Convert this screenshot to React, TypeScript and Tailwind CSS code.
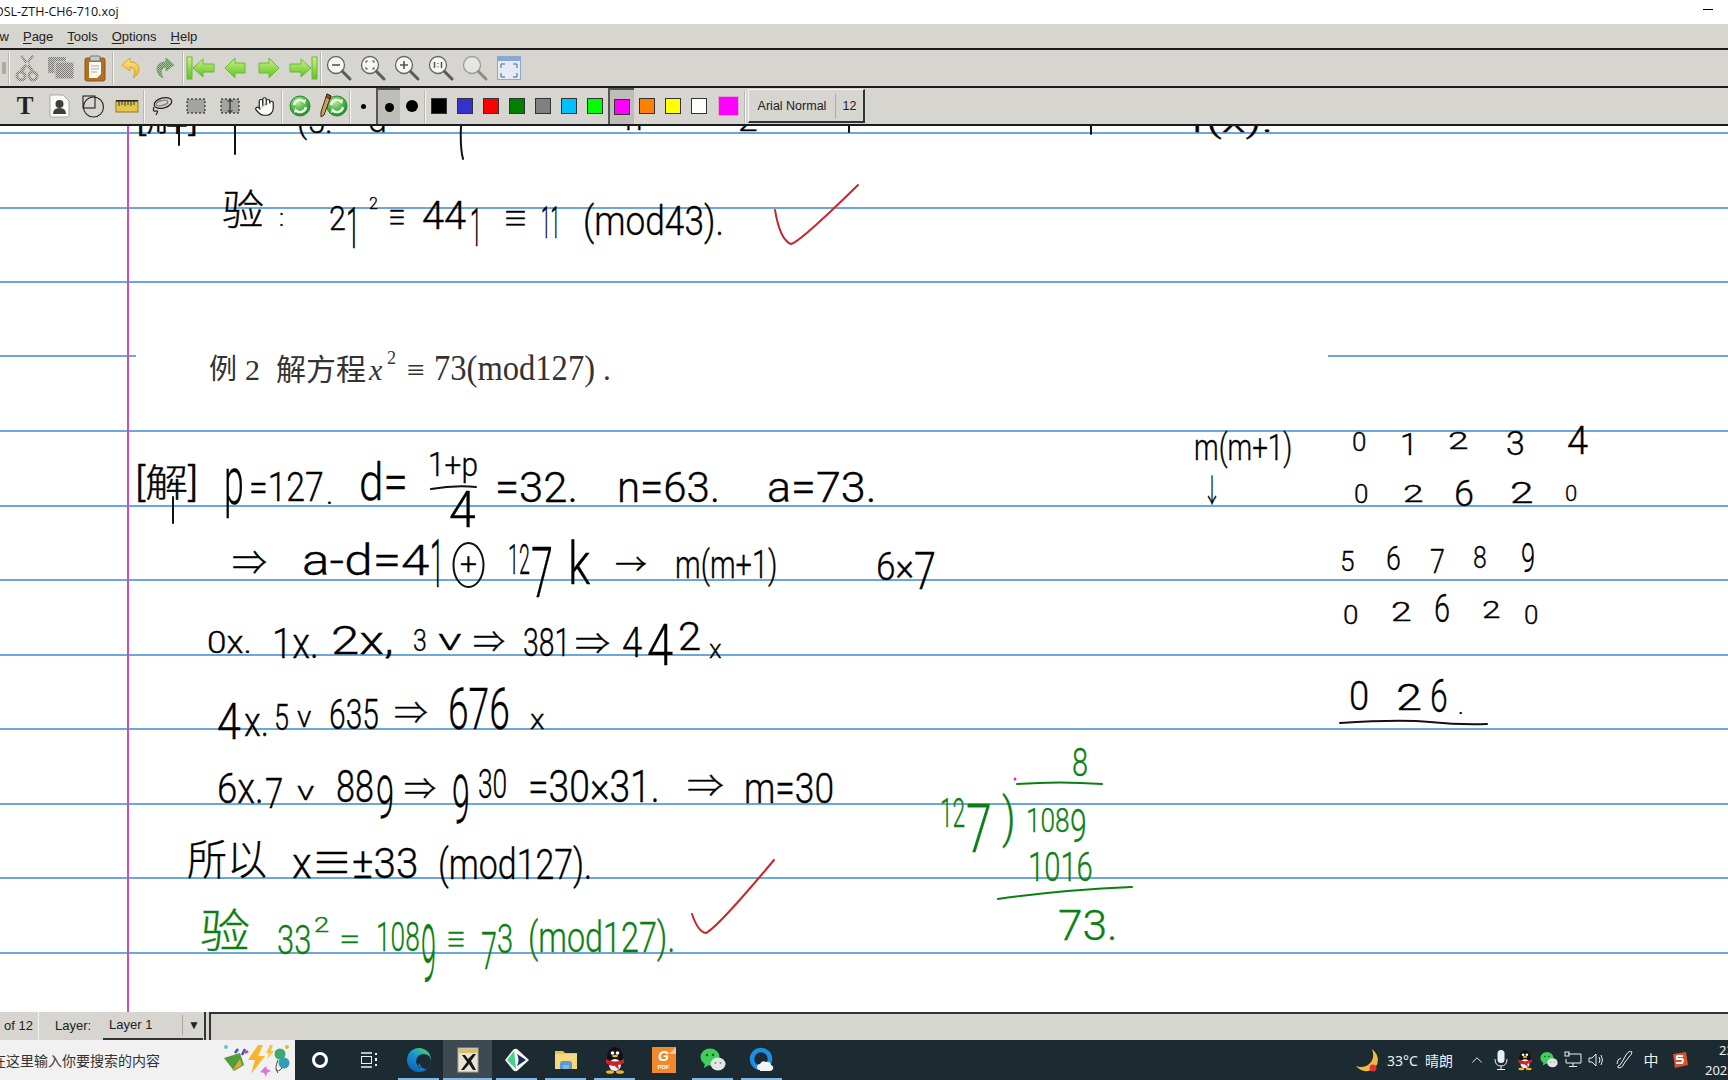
import { useLayoutEffect, useRef, type ReactNode } from "react";
import { ChevronUp, Hand } from "lucide-react";

const RULES = [132, 206.5, 281, 355.4, 430, 504.6, 579, 653.6, 728, 802.6, 877.2, 951.8];

type Chunk = { t: string; x: number; y: number; s: number; w?: number };

const BLACK: Chunk[] = [
	// cut off under the toolbar
	{ t: "[解]", x: 136, y: 129, s: 34, w: 62 },
	{ t: "(5.", x: 297, y: 131, s: 32 },
	{ t: "d=", x: 368, y: 130, s: 34 },
	{ t: "n=", x: 625, y: 128, s: 32 },
	{ t: "2", x: 738, y: 129, s: 32, w: 20 },
	{ t: "f(x).", x: 1190, y: 130, s: 32, w: 84 },
	// verify line
	{ t: "验", x: 222, y: 223, s: 42 },
	{ t: ":", x: 279, y: 224, s: 24 },
	{ t: "2", x: 329, y: 228, s: 34, w: 17 },
	{ t: "1", x: 346, y: 246, s: 58, w: 14 },
	{ t: "2", x: 369, y: 207, s: 16 },
	{ t: "≡", x: 388, y: 226, s: 30, w: 18 },
	{ t: "44", x: 422, y: 227, s: 38, w: 44 },
	{ t: "1", x: 470, y: 244, s: 54, w: 12 },
	{ t: "≡", x: 503, y: 227, s: 30, w: 25 },
	{ t: "11", x: 541, y: 236, s: 44, w: 19 },
	{ t: "(mod43).", x: 583, y: 234, s: 40, w: 141 },
	// solution
	{ t: "[解]", x: 135, y: 494, s: 38, w: 63 },
	{ t: "p", x: 224, y: 503, s: 66, w: 20 },
	{ t: "=127", x: 249, y: 500, s: 40, w: 75 },
	{ t: ".", x: 326, y: 502, s: 30 },
	{ t: "d=", x: 359, y: 499, s: 52, w: 49 },
	{ t: "1+p", x: 428, y: 474, s: 34, w: 50 },
	{ t: "4", x: 449, y: 525, s: 50, w: 27 },
	{ t: "=32.", x: 495, y: 500, s: 42, w: 83 },
	{ t: "n=63.", x: 617, y: 500, s: 42, w: 103 },
	{ t: "a=73.", x: 767, y: 500, s: 42, w: 109 },
	{ t: "⇒", x: 232, y: 573, s: 34, w: 35 },
	{ t: "a-d=4", x: 302, y: 573, s: 42, w: 127 },
	{ t: "1", x: 430, y: 586, s: 66, w: 14 },
	{ t: "+", x: 460, y: 572, s: 30, w: 17 },
	{ t: "12", x: 508, y: 572, s: 42, w: 22 },
	{ t: "7", x: 531, y: 595, s: 70, w: 22 },
	{ t: "k", x: 568, y: 582, s: 60, w: 22 },
	{ t: "→", x: 615, y: 573, s: 30, w: 32 },
	{ t: "m(m+1)", x: 675, y: 576, s: 38, w: 102 },
	{ t: "6×", x: 876, y: 578, s: 38, w: 38 },
	{ t: "7", x: 914, y: 588, s: 52, w: 22 },
	{ t: "0x.", x: 207, y: 651, s: 32, w: 45 },
	{ t: "1x.", x: 272, y: 656, s: 42, w: 47 },
	{ t: "2x,", x: 331, y: 652, s: 38, w: 63 },
	{ t: "3", x: 413, y: 649, s: 32, w: 14 },
	{ t: "v", x: 438, y: 648, s: 30, w: 23 },
	{ t: "⇒", x: 473, y: 650, s: 30, w: 32 },
	{ t: "381", x: 523, y: 654, s: 38, w: 47 },
	{ t: "⇒", x: 575, y: 652, s: 30, w: 35 },
	{ t: "4", x: 622, y: 655, s: 42, w: 20 },
	{ t: "4", x: 647, y: 663, s: 58, w: 26 },
	{ t: "2", x: 678, y: 648, s: 38, w: 23 },
	{ t: "x", x: 709, y: 656, s: 26, w: 13 },
	{ t: "4", x: 217, y: 737, s: 50, w: 24 },
	{ t: "x.", x: 244, y: 735, s: 40, w: 25 },
	{ t: "5", x: 274, y: 728, s: 36, w: 15 },
	{ t: "v", x: 297, y: 725, s: 30, w: 14 },
	{ t: "635", x: 329, y: 727, s: 42, w: 50 },
	{ t: "⇒", x: 394, y: 722, s: 32, w: 34 },
	{ t: "676", x: 448, y: 727, s: 58, w: 62 },
	{ t: "x", x: 530, y: 728, s: 28, w: 15 },
	{ t: "6x.", x: 217, y: 801, s: 42, w: 47 },
	{ t: "7", x: 265, y: 806, s: 42, w: 18 },
	{ t: "v", x: 297, y: 798, s: 26, w: 18 },
	{ t: "88", x: 336, y: 800, s: 44, w: 38 },
	{ t: "9", x: 376, y: 816, s: 60, w: 18 },
	{ t: "⇒", x: 404, y: 797, s: 30, w: 32 },
	{ t: "9", x: 452, y: 822, s: 66, w: 18 },
	{ t: "30", x: 478, y: 797, s: 40, w: 29 },
	{ t: "=30×31.", x: 528, y: 800, s: 44, w: 132 },
	{ t: "⇒", x: 687, y: 795, s: 32, w: 37 },
	{ t: "m=30", x: 744, y: 801, s: 42, w: 90 },
	{ t: "所以", x: 187, y: 873, s: 42, w: 80 },
	{ t: "x≡±33", x: 292, y: 876, s: 42, w: 126 },
	{ t: "(mod127).", x: 438, y: 877, s: 42, w: 154 },
	// side table
	{ t: "m(m+1)", x: 1194, y: 458, s: 36, w: 98 },
	{ t: "↓", x: 1203, y: 500, s: 32, w: 18 },
	{ t: "0", x: 1352, y: 449, s: 26 },
	{ t: "1", x: 1400, y: 453, s: 32 },
	{ t: "2", x: 1448, y: 447, s: 24, w: 20 },
	{ t: "3", x: 1506, y: 453, s: 34 },
	{ t: "4", x: 1567, y: 452, s: 38 },
	{ t: "0", x: 1354, y: 501, s: 26 },
	{ t: "2", x: 1403, y: 500, s: 24, w: 20 },
	{ t: "6", x: 1454, y: 504, s: 36 },
	{ t: "2", x: 1510, y: 501, s: 30, w: 24 },
	{ t: "0", x: 1565, y: 500, s: 22 },
	{ t: "5", x: 1340, y: 570, s: 28, w: 15 },
	{ t: "6", x: 1386, y: 568, s: 34, w: 15 },
	{ t: "7", x: 1430, y: 571, s: 34, w: 15 },
	{ t: "8", x: 1473, y: 566, s: 32, w: 14 },
	{ t: "9", x: 1521, y: 571, s: 40, w: 14 },
	{ t: "0", x: 1343, y: 622, s: 26, w: 15 },
	{ t: "2", x: 1391, y: 619, s: 26, w: 20 },
	{ t: "6", x: 1434, y: 620, s: 38, w: 16 },
	{ t: "2", x: 1482, y: 616, s: 24, w: 18 },
	{ t: "0", x: 1524, y: 622, s: 26, w: 14 },
	{ t: "0", x: 1349, y: 709, s: 40, w: 20 },
	{ t: "2", x: 1396, y: 708, s: 36, w: 26 },
	{ t: "6", x: 1430, y: 710, s: 46, w: 18 },
	{ t: ".", x: 1458, y: 712, s: 24 },
];

const GREEN: Chunk[] = [
	{ t: "验", x: 200, y: 945, s: 46, w: 50 },
	{ t: "33", x: 277, y: 953, s: 40, w: 34 },
	{ t: "2", x: 314, y: 930, s: 20, w: 15 },
	{ t: "=", x: 339, y: 947, s: 30, w: 22 },
	{ t: "108", x: 376, y: 950, s: 40, w: 44 },
	{ t: "9", x: 421, y: 980, s: 80, w: 15 },
	{ t: "≡", x: 446, y: 948, s: 30, w: 20 },
	{ t: "7", x: 481, y: 968, s: 52, w: 16 },
	{ t: "3", x: 497, y: 952, s: 40, w: 16 },
	{ t: "(mod127).", x: 528, y: 950, s: 42, w: 147 },
	{ t: "8", x: 1072, y: 774, s: 38, w: 16 },
	{ t: "12", x: 940, y: 826, s: 40, w: 25 },
	{ t: "7", x: 966, y: 851, s: 66, w: 26 },
	{ t: ")", x: 1002, y: 834, s: 54, w: 14 },
	{ t: "108", x: 1026, y: 830, s: 34, w: 44 },
	{ t: "9", x: 1070, y: 840, s: 46, w: 17 },
	{ t: "1016", x: 1028, y: 880, s: 40, w: 65 },
	{ t: "73.", x: 1058, y: 938, s: 42, w: 60 },
];

const PRINTED: (Chunk & { italic?: boolean })[] = [
	{ t: "例", x: 209, y: 378, s: 28 },
	{ t: "2", x: 245, y: 378, s: 30 },
	{ t: "解方程", x: 276, y: 378, s: 30, w: 90 },
	{ t: "x", x: 369, y: 378, s: 30, italic: true },
	{ t: "2", x: 387, y: 362, s: 18 },
	{ t: "≡", x: 407, y: 378, s: 30, w: 18 },
	{ t: "73(mod127)", x: 434, y: 378, s: 35, w: 161 },
	{ t: ".", x: 603, y: 378, s: 31 },
];

// canvas starts at page y 124, chunks are given by their baseline on the page
function Ink({ c, color, serif, italic }: { c: Chunk; color: string; serif?: boolean; italic?: boolean }) {
	const ref = useRef<HTMLSpanElement>(null);
	useLayoutEffect(() => {
		if (ref.current && c.w) {
			ref.current.style.transform = `scaleX(${c.w / ref.current.offsetWidth})`;
		}
	}, [c.w]);
	return (
		<span
			ref={ref}
			className={`absolute origin-left whitespace-pre leading-none ${
				serif
					? "font-['Liberation_Serif','Noto_Sans_CJK_SC',serif]"
					: "font-['Roboto','Noto_Sans_CJK_SC','DejaVu_Sans',sans-serif] font-light [-webkit-text-stroke:0.35px_currentColor]"
			} ${italic ? "italic" : ""}`}
			style={{ left: c.x, top: c.y - 124 - c.s * 0.841, fontSize: c.s, color }}
		>
			{c.t}
		</span>
	);
}

function Strokes() {
	return (
		<svg className="absolute inset-0" width="1728" height="888" viewBox="0 124 1728 888" fill="none" strokeLinecap="round" strokeLinejoin="round">
			<g stroke="#111" strokeWidth="2">
				<path d="M179 124 V143 M235 124 V152 M461 124 Q460 145 463 157 M849 124 V130 M1091 124 V132" />
				<path d="M173 495 V521 M431 487 Q455 483 476 485" />
				<ellipse cx="468.5" cy="563" rx="15" ry="22" />
				<path d="M1340 721 Q1400 717 1430 720 T1487 722" />
			</g>
			<g stroke="#0b8012" strokeWidth="2">
				<path d="M1017 782 Q1060 779 1102 782" />
				<path d="M998 897 Q1060 888 1132 885" />
			</g>
			<path d="M775 208 Q780 238 791 242 Q800 240 858 183" stroke="#c8262c" strokeWidth="2" />
			<path d="M692 912 Q698 930 706 931 Q718 925 774 858" stroke="#c8262c" strokeWidth="2" />
			<circle cx="1015" cy="777" r="1.5" fill="#d626c8" />
		</svg>
	);
}

function Canvas() {
	return (
		<div className="relative flex-1 overflow-hidden border-t-2 border-[#1c1c1c] bg-white">
			{RULES.map((y) => (
				<div key={y} className="absolute inset-x-0 h-[2px] bg-[#6ba7da]" style={{ top: y - 126 }} />
			))}
			{/* pasted picture of the exercise, it covers one rule */}
			<div className="absolute left-[136px] top-[205px] h-[70px] w-[1192px] bg-white" />
			<div className="absolute inset-y-0 left-[127px] w-[2px] bg-[#c94fb9]" />
			{PRINTED.map((c) => (
				<Ink key={c.x} c={c} color="#333" serif italic={c.italic} />
			))}
			{BLACK.map((c, i) => (
				<Ink key={i} c={c} color="#000" />
			))}
			{GREEN.map((c, i) => (
				<Ink key={i} c={c} color="#0b8012" />
			))}
			<Strokes />
		</div>
	);
}

function Sep() {
	return <div className="h-[33px] w-[2px] shrink-0 border-l border-r border-l-[#b8b7b2] border-r-[#f4f4f1]" />;
}

function Btn({ children, className = "w-[34px]" }: { children?: ReactNode; className?: string }) {
	return <div className={`flex h-full shrink-0 items-center justify-center ${className}`}>{children}</div>;
}

function Dither() {
	return (
		<defs>
			<pattern id="dither" width="2" height="2" patternUnits="userSpaceOnUse">
				<rect width="2" height="2" fill="#d0cfca" />
				<rect width="1" height="1" fill="#777672" />
				<rect x="1" y="1" width="1" height="1" fill="#777672" />
			</pattern>
			<pattern id="ditherg" width="2" height="2" patternUnits="userSpaceOnUse">
				<rect width="2" height="2" fill="#a6c79b" />
				<rect width="1" height="1" fill="#4f8f48" />
				<rect x="1" y="1" width="1" height="1" fill="#4f8f48" />
			</pattern>
		</defs>
	);
}

function Scissors() {
	return (
		<svg width="28" height="28" viewBox="0 0 28 28">
			<Dither />
			<path d="M7 2 L18 18 L21 16 L9 1 Z M21 2 L10 18 L7 16 L19 1 Z" fill="url(#dither)" />
			<circle cx="8" cy="22" r="4" fill="#d6d5d0" stroke="url(#dither)" strokeWidth="3" />
			<circle cx="20" cy="22" r="4" fill="#d6d5d0" stroke="url(#dither)" strokeWidth="3" />
		</svg>
	);
}

function CopyIcon() {
	return (
		<svg width="30" height="28" viewBox="0 0 30 28">
			<Dither />
			<rect x="2" y="3" width="18" height="16" rx="1" fill="url(#dither)" />
			<rect x="9" y="8" width="19" height="17" rx="1" fill="url(#dither)" stroke="#d6d5d0" />
		</svg>
	);
}

function PasteIcon() {
	return (
		<svg width="26" height="28" viewBox="0 0 26 28">
			<rect x="3" y="4" width="20" height="23" rx="2" fill="#b2701f" stroke="#8b5515" />
			<path d="M7 8 H19 V20 L15 24 H7 Z" fill="#f8f8f4" />
			<path d="M9 12 H17 M9 15 H17 M9 18 H15" stroke="#a9a9a5" />
			<rect x="8" y="2" width="10" height="5" rx="1" fill="#c9c9c5" stroke="#77766f" />
		</svg>
	);
}

function CurveArrow({ redo }: { redo?: boolean }) {
	return (
		<svg width="26" height="28" viewBox="0 0 26 28" className={redo ? "-scale-x-100" : ""}>
			<Dither />
			<defs>
				<linearGradient id="undo" x1="0" y1="0" x2="0" y2="1">
					<stop offset="0" stopColor="#ffe98f" />
					<stop offset="1" stopColor="#e8ae1e" />
				</linearGradient>
			</defs>
			<path
				d="M12 4 L4 11 L12 17 V13 C17 13 18 18 15 24 C23 20 24 8 12 8 Z"
				fill={redo ? "url(#ditherg)" : "url(#undo)"}
				stroke={redo ? "#7ba56f" : "#dba61d"}
			/>
		</svg>
	);
}

function GreenArrow({ flip, bar }: { flip?: boolean; bar?: boolean }) {
	return (
		<svg width="30" height="26" viewBox="0 0 30 26" className={flip ? "-scale-x-100" : ""}>
			<defs>
				<linearGradient id="nav" x1="0" y1="0" x2="0" y2="1">
					<stop offset="0" stopColor="#c9f08a" />
					<stop offset="1" stopColor="#5ec51c" />
				</linearGradient>
			</defs>
			{bar && <rect x="1" y="2" width="5" height="22" fill="url(#nav)" stroke="#6cb832" />}
			{bar ? (
				<path d="M7 13 L17 4 V9 H28 V17 H17 V22 Z" fill="url(#nav)" stroke="#6cb832" />
			) : (
				<path d="M5 13 L15 3 V8 H25 V18 H15 V23 Z" fill="url(#nav)" stroke="#6cb832" />
			)}
		</svg>
	);
}

function Lens({ children, dim }: { children?: ReactNode; dim?: boolean }) {
	return (
		<svg width="28" height="28" viewBox="0 0 28 28" fill="none">
			<circle cx="11" cy="11" r="8.5" fill={dim ? "#e6e6e3" : "#f6f6f4"} stroke={dim ? "#9a9a96" : "#666"} strokeWidth="1.3" />
			<path d="M17.5 17.5 L25 25" stroke={dim ? "#8d8d89" : "#5a5a5a"} strokeWidth="3" strokeLinecap="round" />
			{children}
		</svg>
	);
}

function FullScreenIcon() {
	return (
		<svg width="26" height="26" viewBox="0 0 26 26" fill="none">
			<rect x="1.5" y="1.5" width="23" height="23" fill="#e4ebf4" stroke="#8fa9cc" />
			<rect x="2" y="2" width="22" height="4" fill="#88a8d4" />
			<path d="M5 9 L9 9 M5 9 V13 M21 9 H17 M21 9 V13 M5 22 H9 M5 22 V18 M21 22 H17 M21 22 V18" stroke="#7d8ea6" strokeWidth="1.5" />
		</svg>
	);
}

function ImageIcon() {
	return (
		<svg width="22" height="24" viewBox="0 0 22 24">
			<path d="M2 1 H15 L21 7 V22 Q21 23 20 23 H3 Q2 23 2 22 Z" fill="#fbfbf9" stroke="#a9a9a5" />
			<circle cx="11.5" cy="10" r="4" fill="#3e3e3e" />
			<path d="M5 20 Q5 14 11.5 14 Q18 14 18 20 Z" fill="#3e3e3e" />
		</svg>
	);
}

function ShapesIcon() {
	return (
		<svg width="26" height="26" viewBox="0 0 26 26" fill="none" stroke="#222" strokeWidth="1.1">
			<rect x="3" y="3" width="12" height="12" />
			<circle cx="13.5" cy="14" r="10" />
		</svg>
	);
}

function Ruler() {
	return (
		<svg width="24" height="14" viewBox="0 0 24 14">
			<rect x="1" y="2" width="22" height="11" fill="#e2c54c" stroke="#8d7a22" />
			<rect x="1" y="1" width="22" height="1.5" fill="#222" />
			<path d="M4 2 V7 M7 2 V6 M10 2 V7 M13 2 V6 M16 2 V7 M19 2 V6" stroke="#333" />
		</svg>
	);
}

function Lasso() {
	return (
		<svg width="22" height="22" viewBox="0 0 22 22" fill="none" stroke="#222" strokeWidth="1.2">
			<ellipse cx="12" cy="8" rx="9" ry="5" transform="rotate(-15 12 8)" />
			<ellipse cx="11" cy="8" rx="6" ry="2.5" transform="rotate(-15 11 8)" stroke="#777" />
			<path d="M3 12 Q1 17 5 16 Q8 15 5 20" />
		</svg>
	);
}

function SelectRect({ arrow }: { arrow?: boolean }) {
	return (
		<svg width="20" height="16" viewBox="0 0 20 16">
			<rect x="1" y="1" width="18" height="14" fill="#a3a3a0" stroke="#111" strokeDasharray="2 2" />
			{arrow && <path d="M10 2 V14 M7.5 4 L10 1.5 L12.5 4 M7.5 12 L10 14.5 L12.5 12" fill="none" stroke="#111" />}
		</svg>
	);
}

function RefreshDisc({ pen }: { pen?: boolean }) {
	return (
		<svg width="30" height="30" viewBox="0 0 30 30" fill="none">
			<defs>
				<radialGradient id="disc" cx="0.4" cy="0.3" r="0.8">
					<stop offset="0" stopColor="#b7eb9b" />
					<stop offset="0.6" stopColor="#3fae3a" />
					<stop offset="1" stopColor="#137a1f" />
				</radialGradient>
			</defs>
			<circle cx={pen ? 19 : 15} cy="15" r="10" fill="url(#disc)" stroke="#2b8a2f" />
			<g transform={pen ? "translate(4 0)" : ""} stroke="#f2f8ee" strokeWidth="2.4">
				<path d="M9 14 A6 6 0 0 1 19 10.5" />
				<path d="M21 16 A6 6 0 0 1 11 19.5" />
			</g>
			<path d="M17 10 L21 8 L20 13 Z M13 20 L9 22 L10 17 Z" transform={pen ? "translate(4 0)" : ""} fill="#f2f8ee" />
			{pen && (
				<>
					<path d="M9 3 L13 5 L6 24 L3 26 L3 21 Z" fill="#c8a35e" stroke="#3a2b17" />
					<path d="M9 3 L13 5 L12 8 L8 6 Z" fill="#c23a3a" stroke="#3a2b17" />
				</>
			)}
		</svg>
	);
}

function Swatch({ className }: { className: string }) {
	return (
		<Btn className="w-[26px]">
			<div className={`h-4 w-4 border border-[#333] ${className}`} />
		</Btn>
	);
}

function MenuItem({ u, rest, className = "" }: { u: string; rest: string; className?: string }) {
	return (
		<span className={className}>
			<span className="underline underline-offset-2">{u}</span>
			{rest}
		</span>
	);
}

function TopBars() {
	return (
		<>
			<div className="flex h-[24px] items-center overflow-hidden bg-white font-['Open_Sans','Liberation_Sans',sans-serif] text-[12.5px] text-[#111]">
				<span className="ml-[-6px] flex-1 whitespace-nowrap">OSL-ZTH-CH6-710.xoj</span>
				<div className="mb-[5px] mr-[15px] h-[1.5px] w-[10px] bg-black" />
			</div>
			<div className="flex h-[24px] items-center gap-[14px] overflow-hidden bg-[#d6d5d0] pt-[1px] text-[13px] text-[#222]">
				<span className="ml-[-19px]">View</span>
				<MenuItem u="P" rest="age" />
				<MenuItem u="T" rest="ools" />
				<MenuItem u="O" rest="ptions" />
				<MenuItem u="H" rest="elp" />
			</div>
			<div className="flex h-[38px] items-center overflow-hidden border-t-2 border-[#1c1c1c] bg-[#d6d5d0]">
				<Btn className="w-[8px]">
					<div className="h-3 w-1 bg-[#aaa9a5]" />
				</Btn>
				<Sep />
				<Btn><Scissors /></Btn>
				<Btn><CopyIcon /></Btn>
				<Btn><PasteIcon /></Btn>
				<Sep />
				<Btn><CurveArrow /></Btn>
				<Btn><CurveArrow redo /></Btn>
				<Sep />
				<Btn><GreenArrow bar /></Btn>
				<Btn><GreenArrow /></Btn>
				<Btn><GreenArrow flip /></Btn>
				<Btn><GreenArrow flip bar /></Btn>
				<Sep />
				<Btn>
					<Lens><path d="M7 11 H15" stroke="#555" strokeWidth="1.6" /></Lens>
				</Btn>
				<Btn>
					<Lens><path d="M7 9 V7 H9 M13 7 H15 V9 M15 13 V15 H13 M9 15 H7 V13" stroke="#666" strokeWidth="1.2" /></Lens>
				</Btn>
				<Btn>
					<Lens><path d="M7 11 H15 M11 7 V15" stroke="#555" strokeWidth="1.6" /></Lens>
				</Btn>
				<Btn>
					<Lens><path d="M7.5 8 V14 M14.5 8 V14 M11 9 V9.8 M11 12.4 V13.2" stroke="#555" strokeWidth="1.5" /></Lens>
				</Btn>
				<Btn><Lens dim /></Btn>
				<Btn><FullScreenIcon /></Btn>
			</div>
			<div className="flex h-[38px] items-center overflow-hidden border-t-2 border-[#1c1c1c] bg-[#d6d5d0]">
				<Btn className="w-[8px]" />
				<Btn>
					<span className="font-['Liberation_Serif',serif] text-[25px] font-bold text-[#222]">T</span>
				</Btn>
				<Btn><ImageIcon /></Btn>
				<Btn><ShapesIcon /></Btn>
				<Btn className="w-[33px]"><Ruler /></Btn>
				<Sep />
				<Btn><Lasso /></Btn>
				<Btn><SelectRect /></Btn>
				<Btn><SelectRect arrow /></Btn>
				<Btn>
					<Hand size={21} fill="#fff" stroke="#222" strokeWidth={1.4} />
				</Btn>
				<Sep />
				<Btn className="w-[33px]"><RefreshDisc /></Btn>
				<Btn className="w-[33px]"><RefreshDisc pen /></Btn>
				<Sep />
				<Btn className="w-[25px]">
					<div className="h-[5px] w-[5px] rounded-full bg-black" />
				</Btn>
				<Btn className="h-[34px] w-[24px] border-l-2 border-t-2 border-[#555] bg-[#bebdb8]">
					<div className="h-[9px] w-[9px] rounded-full bg-black" />
				</Btn>
				<Btn className="w-[24px]">
					<div className="h-[12px] w-[12px] rounded-full bg-black" />
				</Btn>
				<Sep />
				<Swatch className="bg-black" />
				<Swatch className="bg-[#3333cc]" />
				<Swatch className="bg-[#ff0000]" />
				<Swatch className="bg-[#008000]" />
				<Swatch className="bg-[#808080]" />
				<Swatch className="bg-[#00c0ff]" />
				<Swatch className="bg-[#00ff00]" />
				<Btn className="h-[34px] w-[26px] border-l-2 border-t-2 border-[#555] bg-[#bebdb8]">
					<div className="h-4 w-4 border border-[#333] bg-[#ff00ff]" />
				</Btn>
				<Swatch className="bg-[#ff8000]" />
				<Swatch className="bg-[#ffff00]" />
				<Swatch className="bg-white" />
				<Btn className="w-[32px]">
					<div className="h-5 w-[21px] border border-[#d8a9c8] bg-[#ff00ff]" />
				</Btn>
				<Sep />
				<div className="ml-[2px] flex h-[34px] w-[117px] items-center border-b-2 border-r-2 border-[#333] border-l border-t border-l-[#f2f2ef] border-t-[#f2f2ef] pt-[1px] text-[12.5px] text-[#222]">
					<span className="flex-1 text-center">Arial Normal</span>
					<span className="w-[28px] border-l border-[#a9a8a3] text-center leading-[24px]">12</span>
				</div>
			</div>
		</>
	);
}

function StatusBar() {
	return (
		<div className="flex h-[28px] items-center bg-[#d6d5d0] text-[13px] text-[#222]">
			<span className="flex h-full w-[39px] items-center border-r border-[#f2f2ef] pl-1">of 12</span>
			<span className="ml-[16px] w-[48px]">Layer:</span>
			<div className="flex h-full w-[100px] items-center border-b-2 border-[#333] pl-[6px]">
				<span className="flex-1">Layer 1</span>
				<span className="h-[20px] border-l border-[#a9a8a3]" />
				<span className="w-[20px] pl-[2px] text-center text-[12px]">▼</span>
			</div>
			<div className="ml-[1px] h-full w-[2px] bg-[#333]" />
			<div className="ml-[3px] h-full flex-1 border-l-2 border-t-2 border-[#333]" />
		</div>
	);
}

function PartyIcon() {
	return (
		<svg width="76" height="38" viewBox="0 0 76 38" fill="none">
			<circle cx="8" cy="6" r="2" fill="#5cc6d0" />
			<path d="M6 17 L22 12 L26 24 L16 30 Z" fill="#4f9e3a" />
			<path d="M14 30 L24 24 L22 18 Z" fill="#e9a53a" />
			<path d="M17 12 L20 8 M24 14 L27 8" stroke="#3a52c9" strokeWidth="2.5" />
			<path d="M27 12 L30 10" stroke="#e2483b" strokeWidth="2.5" />
			<path d="M40 4 L30 19 H37 L33 33 L47 15 H40 L45 4 Z" fill="#f7b52a" />
			<path d="M52 4 L48 12 H51 L49 18 L56 10 H53 L55 4 Z" fill="#f9c23d" />
			<path d="M45 28 L48 25 L49 28 L53 30 L49 32 L48 36 L46 32 L42 31 Z" fill="#d77ad6" />
			<circle cx="62" cy="13" r="5.5" fill="#3ea86f" />
			<circle cx="66" cy="22" r="5.5" fill="#2e9fb5" />
			<path d="M60 19 Q56 28 60 32 M64 27 Q60 32 58 28" stroke="#444" />
			<circle cx="69" cy="6" r="2" fill="#d9b84d" />
		</svg>
	);
}

function EdgeIcon() {
	return (
		<svg width="26" height="26" viewBox="0 0 26 26">
			<defs>
				<linearGradient id="edge" x1="0.2" y1="1" x2="0.8" y2="0">
					<stop offset="0" stopColor="#0b5fb8" />
					<stop offset="0.55" stopColor="#1593d6" />
					<stop offset="1" stopColor="#45d66c" />
				</linearGradient>
			</defs>
			<circle cx="13" cy="13" r="12" fill="url(#edge)" />
			<path d="M25 14 Q25 8 18 7 Q11 7 10 14 Q10 19 15 21 Q10 21 13 17 Q15 14 19 16 H25 Z" fill="#1d2a32" />
			<path d="M25 15 Q22 10 17 11 Q12 13 14 18 Q16 22 21 22 Q24 19 25 15 Z" fill="#1d2a32" />
		</svg>
	);
}

function XournalIcon() {
	return (
		<svg width="24" height="28" viewBox="0 0 24 28">
			<rect x="2" y="2" width="20" height="24" fill="#e8e4d2" stroke="#a9a68f" />
			<path d="M3 3 H21 V7 H3 Z" fill="#d8c268" />
			<path d="M6 9 L11 16 L5 24 H8 L13 18 L17 24 H20 L15 15 L20 8 H17 L12 13 L9 9 Z" fill="#16161e" />
		</svg>
	);
}

function DiamondIcon() {
	return (
		<svg width="26" height="26" viewBox="0 0 26 26">
			<path d="M1 13 L9 3 Q11 1 13 2 L25 13 L13 24 Q11 25 9 23 Z" fill="#f2f5f3" />
			<path d="M3 13 L10 4 L12 22 Z" fill="#47cf8b" />
			<path d="M13 7 L22 13 L13 19 Q16 13 13 7 Z" fill="#182c5a" />
		</svg>
	);
}

function FolderIcon() {
	return (
		<svg width="24" height="22" viewBox="0 0 24 22">
			<path d="M1 2 H9 L11 4 H23 V20 H1 Z" fill="#eec04e" />
			<rect x="1" y="5" width="22" height="15" fill="#f5d77f" />
			<path d="M6 20 V15 Q6 12 9 12 H15 Q18 12 18 15 V20 H15 V16 H9 V20 Z" fill="#5b9bd1" />
			<rect x="9" y="16" width="6" height="4" fill="#8bb6da" />
		</svg>
	);
}

function PenguinIcon({ size = 24 }: { size?: number }) {
	return (
		<svg width={size} height={size + 4} viewBox="0 0 24 28">
			<ellipse cx="12" cy="12" rx="8" ry="11" fill="#111" />
			<ellipse cx="12" cy="19" rx="6" ry="6" fill="#f4f4f4" />
			<circle cx="9.5" cy="7" r="1.8" fill="#fff" />
			<circle cx="14.5" cy="7" r="1.8" fill="#fff" />
			<ellipse cx="12" cy="10" rx="3" ry="1.3" fill="#f0b429" />
			<path d="M3 13 Q12 18 21 13 L21 17 Q17 19 15 19 L16 24 L12 20 Q6 20 3 17 Z" fill="#d3202b" />
			<ellipse cx="7" cy="26" rx="4" ry="1.8" fill="#f0b429" />
			<ellipse cx="17" cy="26" rx="4" ry="1.8" fill="#f0b429" />
		</svg>
	);
}

function PdfIcon() {
	return (
		<div className="relative flex h-[26px] w-[24px] flex-col items-center bg-[#f2892d] pt-[2px] text-white">
			<div className="absolute right-0 top-0 h-0 w-0 border-b-[7px] border-l-[7px] border-b-[#f8c595] border-l-transparent" />
			<span className="font-['Liberation_Sans',sans-serif] text-[14px] font-bold italic leading-[15px]">G</span>
			<span className="font-['Liberation_Sans',sans-serif] text-[6px] font-bold leading-[7px]">PDF</span>
		</div>
	);
}

function WeChatIcon({ size = 26 }: { size?: number }) {
	return (
		<svg width={size} height={size} viewBox="0 0 26 26">
			<ellipse cx="10" cy="10" rx="9.5" ry="8.5" fill="#3fcf5c" />
			<path d="M5 16 L4 21 L9 18 Z" fill="#3fcf5c" />
			<circle cx="7" cy="8" r="1.2" fill="#145c24" />
			<circle cx="13" cy="8" r="1.2" fill="#145c24" />
			<ellipse cx="18" cy="17" rx="7.5" ry="6.5" fill="#e3e6e6" />
			<circle cx="15.5" cy="16" r="1" fill="#8d9193" />
			<circle cx="20.5" cy="16" r="1" fill="#8d9193" />
		</svg>
	);
}

function CloudQIcon() {
	return (
		<svg width="26" height="26" viewBox="0 0 26 26" fill="none">
			<circle cx="12" cy="12" r="9" stroke="#1c8fe3" strokeWidth="4.5" />
			<path d="M11 23 Q8 23 8 20 Q8 17 11 17 Q13 13 17 15 Q21 14 22 18 Q25 19 24 22 Q23 24 21 24 H11 Z" fill="#f1f5f8" />
		</svg>
	);
}

function TaskItem({ children, open, active }: { children: ReactNode; open?: boolean; active?: boolean }) {
	return (
		<div className={`relative flex h-full w-[49px] shrink-0 items-center justify-center ${active ? "bg-[#3d4a52]" : ""}`}>
			{children}
			{open && <div className={`absolute bottom-0 h-[2.5px] bg-[#84b9e4] ${active ? "inset-x-0" : "inset-x-[4px]"}`} />}
		</div>
	);
}

function Tray() {
	return (
		<div className="ml-auto flex h-full items-center text-[#eceff0]">
			<svg width="26" height="26" viewBox="0 0 26 26">
				<path d="M18 2 Q22 14 12 19 Q7 21 2 19 Q7 25 14 24 Q24 22 24 12 Q23 6 18 2 Z" fill="#f4b83a" />
				<circle cx="19" cy="21" r="3.5" fill="#e0303a" />
			</svg>
			<span className="ml-[7px] w-[38px] font-['Noto_Sans',sans-serif] text-[14px]">33°C</span>
			<span className="w-[40px] font-['Noto_Sans_CJK_SC',sans-serif] text-[14px]">晴朗</span>
			<Btn className="w-[24px]"><ChevronUp size={18} strokeWidth={1.3} /></Btn>
			<Btn className="w-[24px]">
				<svg width="14" height="22" viewBox="0 0 14 22" fill="none">
					<rect x="3.5" y="1" width="7" height="13" rx="3.5" fill="#eceff0" />
					<path d="M1 10 Q1 17 7 17 Q13 17 13 10 M7 17 V20 M3 20.5 H11" stroke="#eceff0" />
				</svg>
			</Btn>
			<Btn className="w-[24px]"><PenguinIcon size={18} /></Btn>
			<Btn className="w-[24px]"><WeChatIcon size={18} /></Btn>
			<Btn className="w-[24px]">
				<svg width="18" height="18" viewBox="0 0 18 18" fill="none" stroke="#eceff0">
					<path d="M4 3 H17 V12 H2 V8 M9 12 V15 M5 15.5 H13" />
					<rect x="1" y="1" width="4" height="4" />
				</svg>
			</Btn>
			<Btn className="w-[24px]">
				<svg width="18" height="16" viewBox="0 0 18 16" fill="none" stroke="#eceff0">
					<path d="M1 6 H4 L8 2 V14 L4 10 H1 Z M11 5 Q13 8 11 11 M13 3 Q16 8 13 13" />
				</svg>
			</Btn>
			<Btn className="w-[32px]">
				<svg width="18" height="20" viewBox="0 0 18 20" fill="none" stroke="#eceff0">
					<path d="M16 2 Q13 0 10 5 L6 12 Q4 16 2 16 Q1 18 4 18 Q7 17 9 12 L13 7 Q16 4 16 2 Z M5 8 Q1 9 1 14" />
				</svg>
			</Btn>
			<Btn className="w-[20px]">
				<span className="font-['Noto_Sans_CJK_SC',sans-serif] text-[15px]">中</span>
			</Btn>
			<Btn className="w-[44px] pr-[6px]">
				<svg width="18" height="18" viewBox="0 0 18 18">
					<path d="M2 3 L15 1 L17 14 L4 17 Z" fill="#df4f2a" />
					<path d="M12 5 H7 Q5 5 6 8 H11 Q13 9 11 12 H5" fill="none" stroke="#fff" strokeWidth="2" />
				</svg>
			</Btn>
			<div className="flex w-[23px] flex-col overflow-hidden whitespace-nowrap font-['Noto_Sans',sans-serif] text-[13px] leading-[20px]">
				<span className="ml-[14px]">23:06</span>
				<span>2022/8/16</span>
			</div>
		</div>
	);
}

function Taskbar() {
	return (
		<div className="flex h-[40px] items-center bg-[#1c2a31]">
			<div className="flex h-full w-[295px] shrink-0 items-center overflow-hidden bg-[#f1f1f1]">
				<span className="ml-[-8px] w-[226px] shrink-0 whitespace-nowrap font-['Noto_Sans_CJK_SC',sans-serif] text-[14px] text-[#333]">
					在这里输入你要搜索的内容
				</span>
				<PartyIcon />
			</div>
			<Btn className="w-[49px]">
				<div className="h-[16px] w-[16px] rounded-full border-[3px] border-white" />
			</Btn>
			<Btn className="mr-[1px] w-[49px]">
				<svg width="18" height="18" viewBox="0 0 18 18" fill="none" stroke="#f2f2f2">
					<path d="M1 2 H12 M1 16 H12" strokeWidth="1.4" />
					<rect x="1.5" y="5.5" width="10" height="7" />
					<path d="M16 2 V4 M16 7 V10 M16 13 V15" strokeWidth="2" />
				</svg>
			</Btn>
			<TaskItem open><EdgeIcon /></TaskItem>
			<TaskItem open active><XournalIcon /></TaskItem>
			<TaskItem open><DiamondIcon /></TaskItem>
			<TaskItem open><FolderIcon /></TaskItem>
			<TaskItem open><PenguinIcon /></TaskItem>
			<TaskItem><PdfIcon /></TaskItem>
			<TaskItem open><WeChatIcon /></TaskItem>
			<TaskItem open><CloudQIcon /></TaskItem>
			<Tray />
		</div>
	);
}

export default function App() {
	return (
		<div className="flex h-[1080px] w-[1728px] flex-col overflow-hidden bg-white font-['Liberation_Sans',sans-serif]">
			<TopBars />
			<Canvas />
			<StatusBar />
			<Taskbar />
		</div>
	);
}
